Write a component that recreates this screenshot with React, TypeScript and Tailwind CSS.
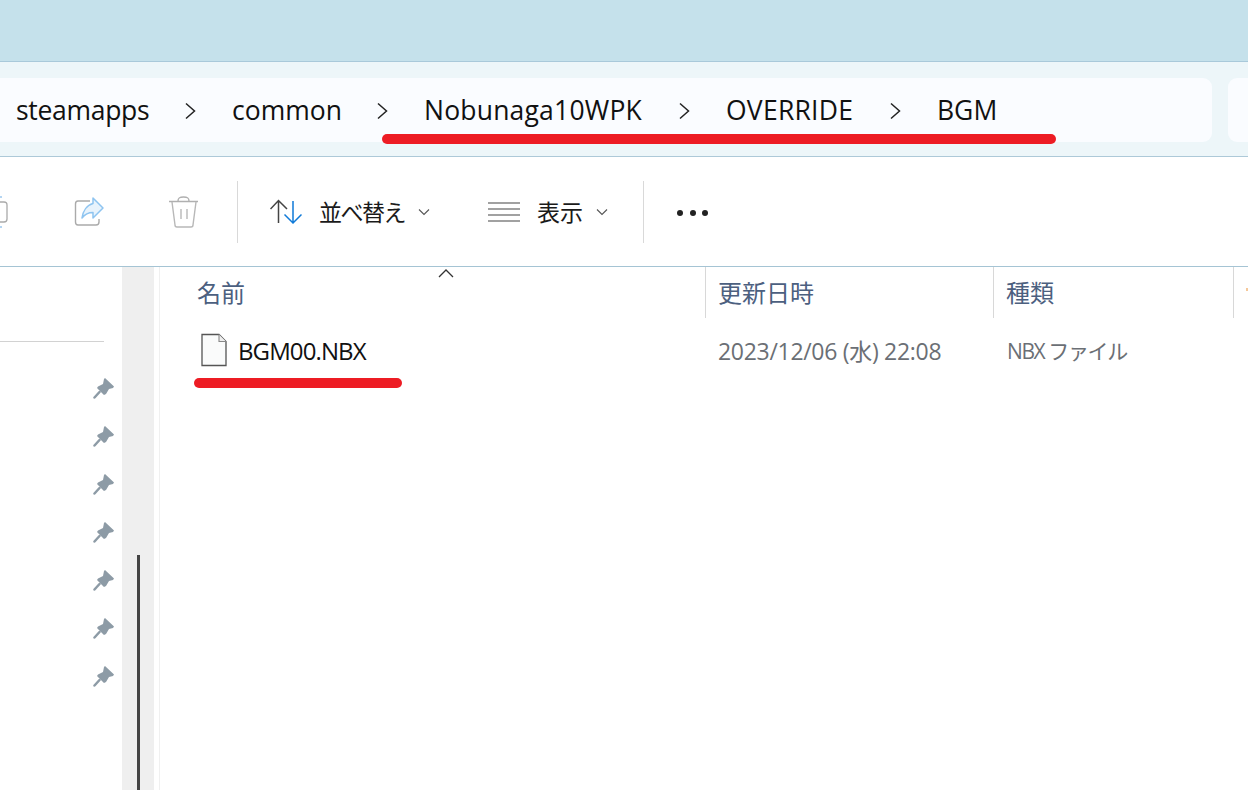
import React from 'react';

const crumbs = [
  { label: 'steamapps', width: 'w-[133px] tracking-[-0.300px]' },
  { label: 'common', width: 'w-[109px]' },
  { label: 'Nobunaga10WPK', width: 'w-[219px] tracking-[0.200px]' },
  { label: 'OVERRIDE', width: 'w-[128px] tracking-[0.250px]' },
  { label: 'BGM', width: 'w-[60px]' },
];

function Chevron() {
  return (
    <svg width="83" height="20" viewBox="0 0 83 20" className="shrink-0" fill="none">
      <path d="M37 2.500L45.500 10L37 17.500" stroke="#222" strokeWidth="1.500" />
    </svg>
  );
}

function Pin() {
  return (
    <svg width="21" height="21" viewBox="0 0 21 21" className="block">
      <path d="M12 0L21 8.500L20 10L16 11L13 16L11 17L4 10L5 8.500L10 6L11 1Z" fill="#8d9ba6" />
      <path d="M6.500 14L1.500 19.500" stroke="#8d9ba6" strokeWidth="2.500" strokeLinecap="round" />
    </svg>
  );
}

function SmallChevron() {
  return (
    <svg width="12" height="8" viewBox="0 0 12 8" fill="none">
      <path d="M1 1.500L6 6.500L11 1.500" stroke="#555" strokeWidth="1.100" />
    </svg>
  );
}

function ColumnHeader({ label, width }: { label: string; width: string }) {
  return (
    <div className={`${width} h-[51px] shrink-0 border-r border-[#d8d8d8] pl-[12px] pt-[8px] text-[24px] leading-[36px] text-[#4c607f]`}>
      {label}
    </div>
  );
}

export default function App() {
  return (
    <div className="relative h-[790px] w-[1248px] overflow-hidden bg-white font-['Open_Sans','Noto_Sans_CJK_JP',sans-serif]">
      <div className="h-[62px] border-b border-[#a9c9da] bg-[#c5e1eb]" />

      <div className="flex h-[95px] gap-[16px] border-b border-[#adc9d8] bg-[#edf6f9] pt-[16px]">
        <div className="flex h-[64px] w-[1212px] items-center rounded-r-[9px] bg-[#fafcff] pl-[16px] pt-[1px] text-[26.500px] text-[#111]">
          {crumbs.map((c, i) => (
            <React.Fragment key={c.label}>
              <span className={`${c.width} shrink-0 whitespace-nowrap`}>{c.label}</span>
              {i < crumbs.length - 1 && <Chevron />}
            </React.Fragment>
          ))}
        </div>
        <div className="h-[64px] flex-1 rounded-l-[9px] bg-[#fafcff]" />
      </div>

      {/* command bar */}
      <div className="flex h-[110px] items-center border-b border-[#a5c4d4]">
        <svg width="237" height="40" viewBox="0 0 237 40" fill="none" className="shrink-0">
          <path d="M-4 10H4C6 10 7 11 7 13V27C7 29 6 30 4 30H-4" stroke="#aaa" strokeWidth="1.300" />
          <path d="M0 5H2M0 35H2" stroke="#9cc8ee" strokeWidth="1.500" />
          <path d="M90 9H78C76 9 75.500 10 75.500 12V30C75.500 32 76 33 78 33H96C98 33 99 32 99 30V27" stroke="#aaa" strokeWidth="1.400" />
          <path d="M93 6L103 16L93 26V20.500C88 20.500 85 22 82 26C83 19 87 13 93 11.500Z" fill="#e8f3fc" stroke="#8ec4f0" strokeWidth="1.500" strokeLinejoin="round" />
          <path d="M169 9.500H198M178 9C178 5.500 180 5 183.500 5C187 5 189 5.500 189 9" stroke="#b0b0b0" strokeWidth="1.400" />
          <path d="M172 10L175 33C175 34.500 176 35 177 35H191C192 35 193 34.500 193 33L196 10M181 17V27M187 17V27" stroke="#b8b8b8" strokeWidth="1.400" />
        </svg>
        <div className="h-[62px] w-px shrink-0 bg-[#d9d9d9]" />

        <svg width="32" height="26" viewBox="0 0 32 26" fill="none" className="ml-[32px] shrink-0">
          <path d="M8.500 24V1.500M0.500 10L8.500 1.500L17 10" stroke="#444" strokeWidth="1.500" />
          <path d="M23 2V24M14.500 15.500L23 24L31.500 15.500" stroke="#0f7ad8" strokeWidth="1.500" />
        </svg>
        <span className="ml-[17px] w-[87px] shrink-0 pt-[1px] text-[23px] leading-none tracking-[-1.500px] text-[#1a1a1a]">並べ替え</span>
        <span className="ml-[12px] flex"><SmallChevron /></span>

        <svg width="32" height="20" viewBox="0 0 32 20" fill="none" className="ml-[58px] shrink-0">
          <path d="M0 1H32M0 7H32M0 13H32M0 19H32" stroke="#444" strokeWidth="1.200" />
        </svg>
        <span className="ml-[17px] w-[46px] shrink-0 pt-[1px] text-[23px] leading-none text-[#1a1a1a]">表示</span>
        <span className="ml-[13px] flex"><SmallChevron /></span>

        <div className="ml-[35px] h-[62px] w-px shrink-0 bg-[#d9d9d9]" />
        <div className="ml-[33px] mt-[2px] flex gap-[6.500px]">
          <span className="size-[6px] rounded-full bg-[#222]" />
          <span className="size-[6px] rounded-full bg-[#222]" />
          <span className="size-[6px] rounded-full bg-[#222]" />
        </div>
      </div>

      <div className="flex h-[523px]">
        {/* quick access column */}
        <div className="w-[122px] shrink-0 pt-[74px]">
          <div className="h-px w-[104px] bg-[#d2d2d2]" />
          <div className="mt-[36px] ml-[93px] flex w-[21px] flex-col gap-[27px]">
            {[0, 1, 2, 3, 4, 5, 6].map((n) => (
              <Pin key={n} />
            ))}
          </div>
        </div>

        <div className="flex w-[32px] shrink-0 justify-center bg-[#efefef] pt-[288px]">
          <div className="h-[235px] w-[3px] bg-[#444]" />
        </div>

        <div className="ml-[5px] min-w-0 flex-1 border-l border-[#f0f0f0]">
          <div className="flex">
            <div className="h-[51px] w-[546px] shrink-0 border-r border-[#d8d8d8] pl-[37px] pt-[8px] text-[24px] leading-[36px] text-[#4c607f]">
              名前
            </div>
            <ColumnHeader label="更新日時" width="w-[288px]" />
            <ColumnHeader label="種類" width="w-[240px]" />
            <div className="ml-[12px] mt-[21px] h-[3px] w-[2px] shrink-0 bg-[#f5c89a]" />
          </div>
          <div className="flex h-[64px] items-center">
            <svg width="28" height="34" viewBox="0 0 28 34" fill="none" className="ml-[40px] shrink-0">
              <path d="M2 1.500H19L26 8.500V32.500H2Z" fill="#fafbfb" stroke="#555" strokeWidth="1.300" />
              <path d="M19 1.500V8.500H26" fill="#eee" stroke="#888" strokeWidth="1.100" />
            </svg>
            <span className="ml-[10px] w-[480px] shrink-0 pt-[1px] text-[24px] tracking-[-0.900px] text-[#111]">BGM00.NBX</span>
            <span className="w-[289px] shrink-0 pt-[2px] text-[23px] tracking-[-0.300px] text-[#6b6f75]">2023/12/06 (水) 22:08</span>
            <span className="pt-[3px] text-[21px] tracking-[-1.400px] text-[#6b6f75]">NBX ファイル</span>
          </div>
        </div>
      </div>

      {/* annotation strokes and the sort caret lie over the window */}
      <div className="absolute left-[382px] top-[134px] h-[10px] w-[674px] rounded-full bg-[#ed1c24]" />
      <div className="absolute left-[194px] top-[378px] h-[10px] w-[208px] rounded-full bg-[#ed1c24]" />
      <svg width="16" height="9" viewBox="0 0 16 9" fill="none" className="absolute left-[438px] top-[269px]">
        <path d="M1 8L8 1L15 8" stroke="#333" strokeWidth="1.300" />
      </svg>
    </div>
  );
}
